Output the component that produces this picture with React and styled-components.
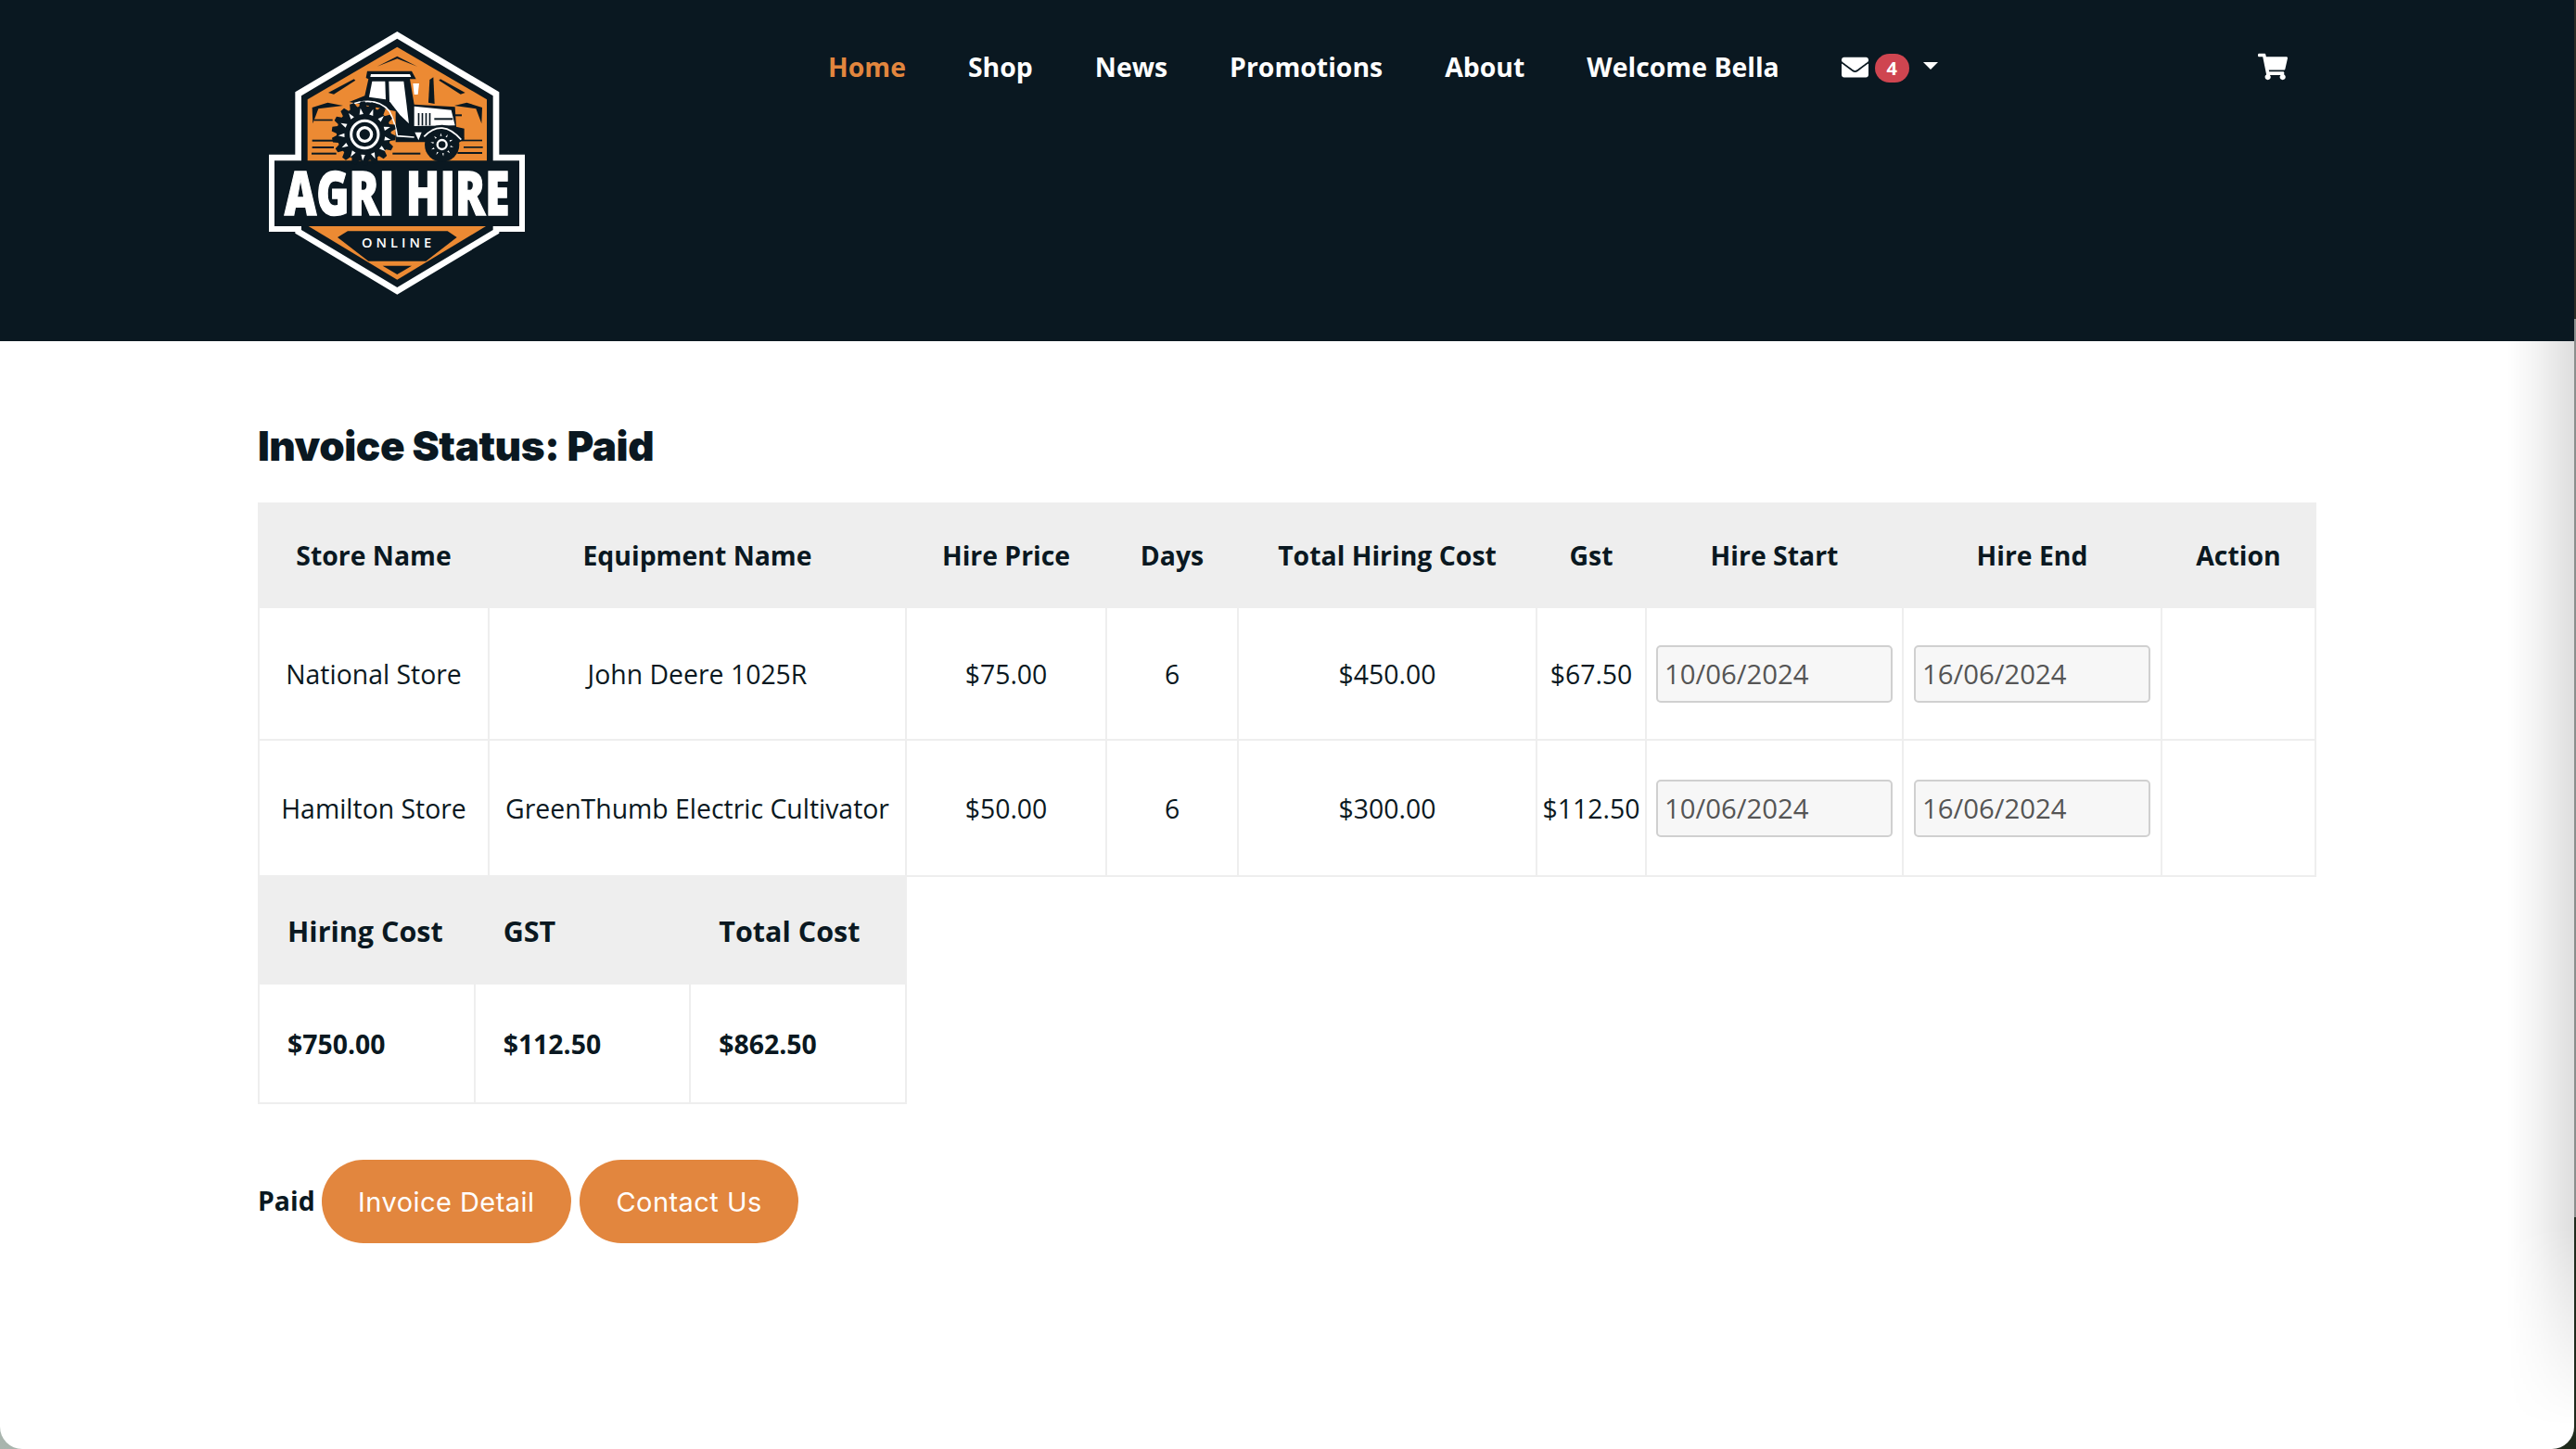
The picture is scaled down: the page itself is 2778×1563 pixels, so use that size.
import React from 'react';
import styled, { createGlobalStyle } from 'styled-components';
import { FaEnvelope, FaShoppingCart } from 'react-icons/fa';

const Global = createGlobalStyle`
  html, body { margin: 0; padding: 0; }
  body {
    background:
      linear-gradient(180deg, #2c2c24 0 22%, #8b8f8d 22% 84%, #1f2a1c 84%) right top / 2px 100% no-repeat,
      linear-gradient(90deg, #a9b5ae 0%, #4a5a4c 50%, #1f2a1c 100%);
    font-family: "Open Sans", sans-serif; color: #0a1821; overflow: hidden;
  }
`;
const Win = styled.div`
  position: relative; width: 2776px; height: 1563px; background: #fff;
  border-radius: 0 0 24px 24px; overflow: hidden;
`;
const Shade = styled.div`
  position: absolute; top: 368px; right: 0; width: 72px; bottom: 0; pointer-events: none;
  background: linear-gradient(90deg, rgba(0,0,0,0), rgba(0,0,0,0.045) 40%, rgba(0,0,0,0.13));
  -webkit-mask-image: linear-gradient(180deg, #000 0%, #000 80%, rgba(0,0,0,0) 98%);
`;
const Header = styled.header`
  height: 368px; background: #0a1821; display: flex; align-items: flex-start; padding: 20px 0 0 260px; box-sizing: border-box;
`;
const LogoSvg = styled.svg`width: 340px; height: 310px; flex: none;`;
const Nav = styled.nav`
  display: flex; align-items: center; margin-left: 293px; height: 104px;
  font-size: 28.4px; font-weight: 700; color: #fff;
`;
const NavLink = styled.a`
  color: ${p => p.$active ? '#e2863e' : '#fff'}; margin-right: 67px; white-space: nowrap;
`;
const Mail = styled.div`display: flex; align-items: center;`;
const Badge = styled.span`
  width: 37px; height: 31px; border-radius: 16px; background: #cf4550; color: #fff; font-size: 20px; font-weight: 700;
  display: flex; align-items: center; justify-content: center; margin: 3px 0 0 7px;
`;
const Caret = styled.span`
  width: 0; height: 0; border-left: 8px solid transparent; border-right: 8px solid transparent; border-top: 8px solid #fff; margin: 0 0 2px 15px;
`;
const Cart = styled.div`margin-left: 345px; display: flex;`;
const Main = styled.main`padding: 0 0 0 278px;`;
const Title = styled.h1`
  margin: 0; height: 174px; padding-top: 88px; box-sizing: border-box; line-height: 50px; font-family: Inter, sans-serif; font-weight: 900; font-size: 44px; letter-spacing: -0.45px; color: #0a1821;
`;
const Table = styled.table`
  border-collapse: collapse; table-layout: fixed; width: ${p => p.$w}px; font-size: 28.4px;
`;
const Th = styled.th`
  background: #eeeeee; border: 2px solid #eeeeee; font-weight: 700; height: ${p => p.$h}px; padding: 0 ${p => p.$pad || 0}px;
  font-size: ${p => p.$large ? '30.5px' : 'inherit'};
  text-align: ${p => p.$left ? 'left' : 'center'}; box-sizing: border-box;
`;
const Td = styled.td`
  border: 2px solid #eeeeee; height: ${p => p.$h}px; padding: 0 ${p => p.$pad || 0}px; text-align: ${p => p.$left ? 'left' : 'center'};
  font-weight: ${p => p.$bold ? 700 : 400}; box-sizing: border-box; white-space: nowrap;
`;
const DateInput = styled.input`
  width: 255px; height: 62px; box-sizing: border-box; display: block; margin: 0 auto; background: #f7f7f7; border: 2px solid #d0d0d0; border-radius: 5px;
  font: 400 29.3px "Open Sans", sans-serif; color: #555; padding: 0 7px;
`;
const Actions = styled.div`display: flex; align-items: center; margin-top: 60px;`;
const Paid = styled.b`font-size: 28.4px; margin: 0 7px 2px 0;`;
const Btn = styled.button`
  height: 90px; border: 0; border-radius: 45px; background: #e2863e; color: #fff; font: 400 29px Inter, sans-serif; letter-spacing: .45px; padding: 0 39.5px; margin-right: 9px; white-space: nowrap;
`;

const gear = (cx, cy, r1, r2, n) => {
  const pts = [];
  for (let i = 0; i < n; i++) {
    const s = (i / n) * Math.PI * 2, st = (Math.PI * 2) / n;
    [[r1, 0], [r2, 0.2], [r2, 0.6], [r1, 0.8]].forEach(([r, t]) => {
      pts.push(`${(cx + r * Math.cos(s + t * st)).toFixed(1)},${(cy + r * Math.sin(s + t * st)).toFixed(1)}`);
    });
  }
  return pts.join(' ');
};
const spikes = (cx, cy, r1, r2, n, w) => {
  const out = [];
  for (let i = 0; i < n; i++) {
    const a = (i / n) * Math.PI * 2 + 0.2;
    const p = (r, d) => `${(cx + r * Math.cos(a + d)).toFixed(1)},${(cy + r * Math.sin(a + d)).toFixed(1)}`;
    out.push(<polygon key={i} points={`${p(r1, -w)} ${p(r1, w)} ${p(r2, 0)}`} fill="#fff" />);
  }
  return out;
};

const D = '#0a1821', O = '#ec8a33';
const Logo = () => (
  <LogoSvg viewBox="0 0 1020 930">
    <polygon fill="#fff" points="505,42 835,238 835,440 918,440 918,690 835,690 835,695 505,893 175,695 175,690 90,690 90,440 175,440 175,238" />
    <polygon fill={D} points="505,65 815,250 815,460 900,460 900,672 815,672 815,684 505,870 195,684 195,672 108,672 108,460 195,460 195,250" />
    <polygon fill={O} points="505,92 795,262 795,460 215,460 215,262" />
    <polygon fill={O} points="218,672 792,672 505,845" />
    <polygon fill={D} points="345,688 668,688 698,708 598,785 412,785 312,708" />
    <polygon fill={D} points="458,800 552,800 505,828" />
    <g fill={D}>
      <polygon points="440,155 505,122 570,155 505,130" />
      <polygon points="282,240 365,196 370,200 300,245" />
      <polygon points="725,240 645,196 640,200 710,245" />
      <polygon points="230,288 280,272 330,282 250,292 232,340" />
      <polygon points="780,288 730,272 690,282 760,292 778,340" />
      <rect x="236" y="326" width="60" height="5" />
      <rect x="230" y="392" width="70" height="6" />
      <rect x="230" y="414" width="70" height="6" />
      <rect x="228" y="434" width="80" height="6" />
      <rect x="700" y="392" width="80" height="5" />
      <rect x="720" y="414" width="62" height="5" />
      <rect x="700" y="432" width="80" height="6" />
      <rect x="490" y="434" width="90" height="6" />
      <rect x="690" y="310" width="24" height="6" />
    </g>
    <g>
      <polygon fill={D} points="408,170 552,170 566,196 546,196 560,278 692,286 696,350 722,356 722,396 610,400 500,400 500,300 350,270 400,250 412,196 404,192" />
      <polygon fill="#fff" points="420,180 546,180 550,189 418,189" />
      <polygon fill="#fff" points="424,203 466,203 468,262 414,254" />
      <polygon fill="#fff" points="478,203 526,203 543,340 514,312 480,268" />
      <polygon fill={D} points="606,272 610,198 622,190 626,276" />
      <polygon fill="#fff" points="556,210 576,210 572,246 560,246" />
      <polygon fill="#fff" points="560,284 680,296 692,346 560,348" />
      <g fill={D}>
        <rect x="572" y="306" width="5" height="40" />
        <rect x="584" y="306" width="5" height="40" />
        <rect x="596" y="306" width="5" height="40" />
        <rect x="608" y="306" width="5" height="40" />
        <rect x="625" y="322" width="60" height="6" />
      </g>
      <path d="M355,278 Q440,250 480,300 Q500,340 505,380 L560,384" fill="none" stroke="#fff" strokeWidth="5" />
      <polygon fill="#fff" points="562,368 584,368 574,394" />
      <polygon fill={D} points={gear(397, 372, 88, 104, 18)} />
      {spikes(400, 375, 66, 86, 13, 0.1)}
      <circle cx="400" cy="375" r="44" fill="none" stroke="#fff" strokeWidth="9" />
      <circle cx="400" cy="375" r="22" fill="none" stroke="#fff" strokeWidth="10" />
      <circle cx="650" cy="408" r="56" fill={D} />
      <path d="M590,388 Q650,320 714,394" fill="none" stroke={D} strokeWidth="22" />
      <path d="M592,382 Q650,322 712,392" fill="none" stroke="#fff" strokeWidth="5" />
      {spikes(650, 408, 28, 38, 10, 0.1)}
      <circle cx="650" cy="408" r="15" fill="none" stroke="#fff" strokeWidth="7" />
    </g>
    <text transform="translate(140 636) scale(0.73 1)" fill="#fff" stroke="#fff" strokeWidth="4" fontFamily="'Open Sans',sans-serif" fontWeight="800" fontSize="196">AGRI HIRE</text>
    <text x="390" y="740" fill="#fff" fontFamily="'Open Sans',sans-serif" fontWeight="600" fontSize="44" letterSpacing="12">ONLINE</text>
  </LogoSvg>
);

const cols = [248, 450, 216, 142, 322, 118, 277, 279, 166];
const heads = ['Store Name', 'Equipment Name', 'Hire Price', 'Days', 'Total Hiring Cost', 'Gst', 'Hire Start', 'Hire End', 'Action'];
const rows = [
  { h: 143, v: ['National Store', 'John Deere 1025R', '$75.00', '6', '$450.00', '$67.50'] },
  { h: 147, v: ['Hamilton Store', 'GreenThumb Electric Cultivator', '$50.00', '6', '$300.00', '$112.50'] },
];

export default function App() {
  return (
    <Win>
      <Global />
      <Header>
        <Logo />
        <Nav>
          <NavLink $active>Home</NavLink>
          <NavLink>Shop</NavLink>
          <NavLink>News</NavLink>
          <NavLink>Promotions</NavLink>
          <NavLink>About</NavLink>
          <NavLink>Welcome Bella</NavLink>
          <Mail>
            <FaEnvelope size={29} color="#fff" />
            <Badge>4</Badge>
            <Caret />
          </Mail>
          <Cart><FaShoppingCart size={32} color="#fff" /></Cart>
        </Nav>
      </Header>
      <Main>
        <Title>Invoice Status: Paid</Title>
        <Table $w={2218}>
          <colgroup>{cols.map((w, i) => <col key={i} width={w} />)}</colgroup>
          <thead>
            <tr>{heads.map(h => <Th key={h} $h={112}>{h}</Th>)}</tr>
          </thead>
          <tbody>
            {rows.map(r => (
              <tr key={r.v[0]}>
                {r.v.map((c, i) => <Td key={i} $h={r.h}>{c}</Td>)}
                <Td $h={r.h}><DateInput readOnly value="10/06/2024" /></Td>
                <Td $h={r.h}><DateInput readOnly value="16/06/2024" /></Td>
                <Td $h={r.h} />
              </tr>
            ))}
          </tbody>
        </Table>
        <Table $w={700}>
          <thead>
            <tr>
              <Th $left $large $pad={30} $h={114}>Hiring Cost</Th>
              <Th $left $large $pad={30} $h={114}>GST</Th>
              <Th $left $large $pad={30} $h={114}>Total Cost</Th>
            </tr>
          </thead>
          <tbody>
            <tr>
              <Td $left $bold $pad={30} $h={129}>$750.00</Td>
              <Td $left $bold $pad={30} $h={129}>$112.50</Td>
              <Td $left $bold $pad={30} $h={129}>$862.50</Td>
            </tr>
          </tbody>
        </Table>
        <Actions>
          <Paid>Paid</Paid>
          <Btn>Invoice Detail</Btn>
          <Btn>Contact Us</Btn>
        </Actions>
      </Main>
      <Shade />
    </Win>
  );
}
